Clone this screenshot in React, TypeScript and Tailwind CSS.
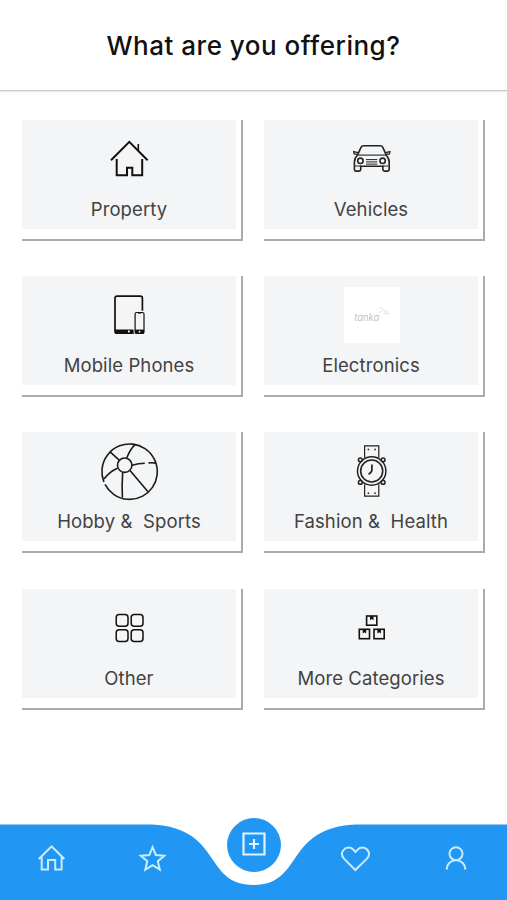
import React from 'react';

const PropertyIcon = () => (
  <svg viewBox="0 0 60 60" className="w-[60px] h-[60px]" fill="none" stroke="#111" strokeWidth="2">
    <path d="M12 30.2 30.3 11.8 48.6 30.2" />
    <path d="M17.7 29v16.3H28v-7.6h5.3v7.6h9.9V29" />
    <path d="M39.3 14v6.5" strokeWidth="1.6" />
  </svg>
);

const VehicleIcon = () => (
  <svg viewBox="0 0 60 60" className="w-[60px] h-[60px]" fill="none" stroke="#222" strokeWidth="1.6">
    <path d="M16.6 24.8 20 17.4q.8-1.6 2.6-1.6h16.6q1.8 0 2.6 1.6l3.4 7.4" />
    <path d="M16.6 25q-3.2 3-3.2 7v7.6q0 1.5 1.5 1.5h3.2q1.6 0 1.6-1.5v-3.4h22.2v3.4q0 1.5 1.6 1.5h3.2q1.5 0 1.5-1.5V32q0-4-3.2-7" />
    <path d="M16 25.1h29.6" strokeWidth="1.1" />
    <path d="M17 22.6l-4.3-.9.5 2.2 3 .5M44.6 22.6l4.3-.9-.5 2.2-3 .5" strokeWidth="1.3" />
    <circle cx="19.4" cy="30.8" r="2.7" />
    <circle cx="41.6" cy="30.8" r="2.7" />
    <path d="M25 29.6h11.3M25 31.9h11.3M25 34.1h11.3" strokeWidth="1" />
    <path d="M14 36h6M41.5 36h6" strokeWidth="1" />
  </svg>
);

const MobileIcon = () => (
  <svg viewBox="0 0 60 60" className="w-[60px] h-[60px]" fill="none" stroke="#111" strokeWidth="1.7">
    <path d="M34.5 47.2H18q-2 0-2-2V12.3q0-2.2 2.2-2.2h23q2.2 0 2.2 2.2v12.5" />
    <path d="M16 43.4h18.6v4.4H18q-2 0-2-2z" fill="#111" stroke="none" />
    <rect x="36.1" y="26.5" width="8.9" height="21" rx="1.5" strokeWidth="1.2" />
    <path d="M36 43.6h9v4h-9z" fill="#111" stroke="none" />
    <path d="M39 27h3.2" strokeWidth="1.3" />
    <rect x="29" y="44.5" width="1.7" height="1.9" fill="#fff" stroke="none" />
    <circle cx="40.5" cy="45.7" r=".9" fill="#fff" stroke="none" />
  </svg>
);

const TankaLogo = () => (
  <svg viewBox="0 0 60 60" className="w-[60px] h-[60px]">
    <rect x="3" y="1" width="56" height="56" fill="#fff" />
    <text
      x="13.3"
      y="34.6"
      fill="#c3c3c3"
      fontFamily="Inter, sans-serif"
      fontStyle="italic"
      fontSize="10"
      textLength="25"
      lengthAdjust="spacingAndGlyphs"
    >
      tanka
    </text>
    <path d="M38 26.5q3.2-.5 4.5-2.8-1.6-2.6-4-1.5M42.5 23.7q2.6 1 1.8 3.8M44 24.5q3 .3 4 3.5-3-1-5.8 0" fill="none" stroke="#ddd" strokeWidth=".8" />
  </svg>
);

const BallIcon = () => (
  <svg viewBox="0 0 60 60" className="w-[60px] h-[60px]" fill="none" stroke="#1b1b1b" strokeWidth="1.6">
    <path d="M6 42.4A27.7 27.7 0 1 0 4.9 40" />
    <circle cx="25.7" cy="23.2" r="7.2" />
    <path d="M27.8 15.8Q31.1 7.4 36.4 2.1M20.2 18.2 10.8 9.7M18.4 26.2Q10 30 5 37M23.7 30.3q-1 13-.3 25.3M31 28.6 48.8 49.5M33 23.2q6.5-1.9 12.8-2M49.500 20.900q4-.5 7.400.2" />
  </svg>
);

const WatchIcon = () => (
  <svg viewBox="0 0 60 60" className="w-[60px] h-[60px]" fill="none" stroke="#222" strokeWidth="1.5">
    <path d="M23.6 15.8V3.9h14.2v11.9M23.6 42.2v11.9h14.2V42.2" strokeWidth="1.2" />
    <circle cx="30.7" cy="29" r="14.2" />
    <circle cx="30.7" cy="29" r="11" strokeWidth="1.6" />
    <g fill="#f3f5f7">
      <circle cx="19.3" cy="17.8" r="1.9" />
      <circle cx="42.1" cy="17.8" r="1.9" />
      <circle cx="19.3" cy="40.4" r="1.9" />
      <circle cx="42.1" cy="40.4" r="1.9" />
    </g>
    <path d="M30.9 22.5v5.8q0 1-.8 1.7l-2.5 2.3" strokeWidth="1.7" />
    <g fill="#333" stroke="none">
      <circle cx="27.4" cy="7.5" r=".9" />
      <circle cx="34" cy="7.5" r=".9" />
      <circle cx="27.4" cy="51.2" r=".9" />
      <circle cx="34" cy="51.2" r=".9" />
    </g>
  </svg>
);

const OtherIcon = () => (
  <svg viewBox="0 0 60 60" className="w-[60px] h-[60px]" fill="none" stroke="#111" strokeWidth="1.5">
    <rect x="17.2" y="15.5" width="11.8" height="11.8" rx="3" />
    <rect x="32.2" y="15.5" width="11.8" height="11.8" rx="3" />
    <rect x="17.2" y="30.7" width="11.8" height="11.8" rx="3" />
    <rect x="32.2" y="30.7" width="11.8" height="11.8" rx="3" />
  </svg>
);

const BoxesIcon = () => (
  <svg viewBox="0 0 60 60" className="w-[60px] h-[60px]" fill="none" stroke="#111" strokeWidth="1.6">
    <rect x="25.6" y="17" width="10.2" height="9.2" />
    <rect x="18.3" y="30.3" width="10.2" height="9.4" />
    <rect x="33" y="30.3" width="10.2" height="9.4" />
    <path d="M29 17.2h3.5v4l-1.75-1.2-1.75 1.2zM21.7 30.5h3.5v4l-1.75-1.2-1.75 1.2zM36.4 30.5h3.5v4l-1.75-1.2-1.75 1.2z" fill="#111" stroke="none" />
  </svg>
);

const categories = [
  { name: 'Property', Icon: PropertyIcon },
  { name: 'Vehicles', Icon: VehicleIcon },
  { name: 'Mobile Phones', Icon: MobileIcon },
  { name: 'Electronics', Icon: TankaLogo },
  { name: 'Hobby &  Sports', Icon: BallIcon },
  { name: 'Fashion &  Health', Icon: WatchIcon },
  { name: 'Other', Icon: OtherIcon },
  { name: 'More Categories', Icon: BoxesIcon },
];

const navIcons = [
  { name: 'Home', d: 'M5.8 19 18.6 6.3 31.4 19M8.7 17.2v12.3H15V20h7.2v9.5h6.4V17.2' },
  { name: 'Favourites', d: 'M18.6 7.2 21.8 15l8.5.7-6.5 5.5 2 8.4-7.2-4.5-7.3 4.5 2-8.4-6.5-5.5 8.5-.7z' },
  { name: 'Add', d: '' },
  { name: 'Likes', d: 'M18.3 30 7 18.6C4.7 16 4.5 12.5 6.5 10c2.7-3.3 7.3-3.2 9.8-.4l2.2 2.4 2.2-2.4c2.5-2.8 7.1-2.9 9.8.4 2 2.5 1.8 6-.5 8.6z' },
  { name: 'Profile', d: 'M11.5 13.7a6.5 6.5 0 1 0 13 0 6.5 6.5 0 1 0-13 0M8.8 29.5v-.7a9.2 8.6 0 0 1 18.4 0v.7' },
];

const BottomNav = () => (
  <nav className="relative h-[76px]">
    <svg viewBox="0 0 507 76" className="absolute inset-0 w-full h-full" fill="#2196f3">
      <path d="M0 .5h152C223 4.3 203 61 253.5 61S284 4.3 355 .5h152V76H0z" />
    </svg>
    <div className="relative flex h-[67px]">
      {navIcons.map(({ name, d }) => (
        <button key={name} aria-label={name} className="flex-1 flex items-center justify-center">
          {d ? (
            <svg viewBox="0 0 36 36" className="w-9 h-9" fill="none" stroke="#c9edff" strokeWidth="2">
              <path d={d} />
            </svg>
          ) : (
            <span className="w-[54px] h-[54px] shrink-0 -mt-[26px] rounded-full bg-[#2196f3] flex items-center justify-center">
              <svg viewBox="0 0 24 24" className="w-6 h-6 -mt-px" fill="none" stroke="#dff4ff" strokeWidth="2.2">
                <path d="M1.5 1.5h21v21h-21zM12 7v10M7 12h10" />
              </svg>
            </span>
          )}
        </button>
      ))}
    </div>
  </nav>
);

const App = () => {
  return (
    <div className="w-full h-[900px] flex flex-col bg-white font-[Inter,sans-serif] overflow-hidden">
      <header className="h-[91px] shrink-0 border-b border-[#c8c8c8] shadow-[0_1px_1px_#ececec] flex items-center justify-center pt-0.5">
        <h1 className="text-[26px] leading-8 font-medium tracking-[0.5px] text-[#111]">What are you offering?</h1>
      </header>

      <main className="flex-1 px-[22px] pt-[29px]">
        <div className="grid grid-cols-2 gap-x-[21px] gap-y-[35.2px]">
          {categories.map(({ name, Icon }) => (
            <div key={name} className="h-[121px] border-r-2 border-b-2 border-[#ababab] pr-[5px]">
              <div className="h-[109px] bg-[#f3f5f7] pt-2.5 flex flex-col items-center">
                <Icon />
                <span className="mt-[7px] text-[18.5px] leading-6 tracking-[0.1px] text-[#424242] whitespace-pre">
                  {name}
                </span>
              </div>
            </div>
          ))}
        </div>
      </main>

      <BottomNav />
    </div>
  );
};

export default App;
